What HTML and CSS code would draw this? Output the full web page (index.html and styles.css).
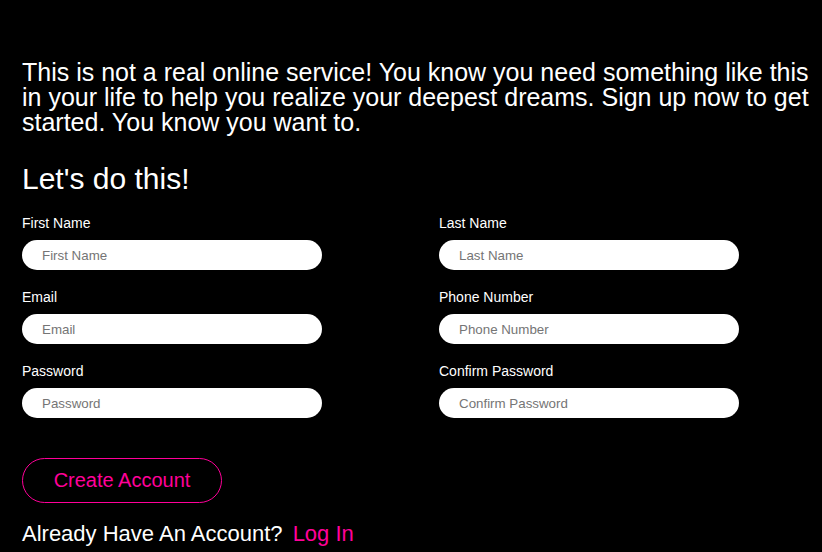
FILE: index.html
```html
<!DOCTYPE html>
<html lang="en">
<head>
<meta charset="utf-8">
<title>Sign Up</title>
<link rel="stylesheet" href="styles.css">
</head>
<body>
<main class="page">
  <p class="intro">This is not a real online service! You know you need something like this in your life to help you realize your deepest dreams. Sign up now to get started. You know you want to.</p>
  <h1 class="title">Let's do this!</h1>
  <form class="form">
    <div class="fields">
      <div class="field">
        <label class="label" for="first">First Name</label>
        <input class="input" id="first" type="text" placeholder="First Name">
      </div>
      <div class="field">
        <label class="label" for="last">Last Name</label>
        <input class="input" id="last" type="text" placeholder="Last Name">
      </div>
      <div class="field">
        <label class="label" for="email">Email</label>
        <input class="input" id="email" type="email" placeholder="Email">
      </div>
      <div class="field">
        <label class="label" for="phone">Phone Number</label>
        <input class="input" id="phone" type="tel" placeholder="Phone Number">
      </div>
      <div class="field">
        <label class="label" for="pw">Password</label>
        <input class="input" id="pw" type="password" placeholder="Password">
      </div>
      <div class="field">
        <label class="label" for="pw2">Confirm Password</label>
        <input class="input" id="pw2" type="password" placeholder="Confirm Password">
      </div>
    </div>
    <button class="btn" type="button">Create Account</button>
  </form>
  <p class="login">Already Have An Account? <a class="login-link" href="#">Log In</a></p>
</main>
</body>
</html>
```
FILE: styles.css
```css
html, body {
  margin: 0;
  padding: 0;
  background: #000;
  height: 100%;
  overflow: hidden;
}

body {
  font-family: "Liberation Sans", Arial, sans-serif;
  color: #fff;
}

.page {
  padding: 60px 0 0 22px;
}

.intro {
  margin: 0;
  font-size: 25px;
  line-height: 25px;
}

.title {
  margin: 27px 0 0;
  font-size: 30px;
  font-weight: normal;
  line-height: 34px;
}

.form {
  margin-top: 19px;
}

.fields {
  display: grid;
  grid-template-columns: 417px 1fr;
  row-gap: 19px;
}

.field {
  display: flex;
  flex-direction: column;
  align-items: flex-start;
}

.label {
  font-size: 14px;
  line-height: 16px;
  margin-bottom: 9px;
}

.input {
  box-sizing: border-box;
  width: 300px;
  height: 30px;
  margin: 0;
  border: none;
  border-radius: 15px;
  background: #fff;
  padding: 0 20px;
  font-family: "Liberation Sans", Arial, sans-serif;
  font-size: 13.33px;
  color: #333;
  outline: none;
}

.input::placeholder {
  color: #757575;
}

.btn {
  display: block;
  box-sizing: border-box;
  margin-top: 40px;
  width: 200px;
  height: 45px;
  border: 1px solid #ff0099;
  border-radius: 23px;
  background: transparent;
  color: #ff0099;
  font-family: "Liberation Sans", Arial, sans-serif;
  font-size: 20px;
  padding: 0;
  cursor: pointer;
}

.login {
  margin: 18px 0 0;
  font-size: 22px;
  line-height: 25px;
}

.login-link {
  margin-left: 4px;
  color: #ff0099;
  text-decoration: none;
}
```
